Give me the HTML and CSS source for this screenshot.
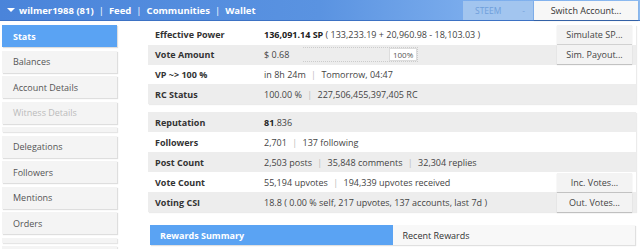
FILE: index.html
```html
<!DOCTYPE html>
<html>
<head>
<meta charset="utf-8">
<link rel="stylesheet" href="styles.css">
</head>
<body>
<header class="topbar">
  <nav class="nav">
    <span class="caret"></span>
    <a class="nav-link">wilmer1988 (81)</a><span class="sep">|</span>
    <a class="nav-link">Feed</a><span class="sep">|</span>
    <a class="nav-link">Communities</a><span class="sep">|</span>
    <a class="nav-link">Wallet</a>
  </nav>
  <div class="topright">
    <div class="select"><span>STEEM</span><span class="sel-arrow">-</span></div>
    <div class="switch">Switch Account...</div>
  </div>
</header>
<div class="layout">
  <aside class="sidebar">
    <div class="side-item active">Stats</div>
    <div class="side-item">Balances</div>
    <div class="side-item">Account Details</div>
    <div class="side-item disabled">Witness Details</div>
    <div class="side-sep"></div>
    <div class="side-item">Delegations</div>
    <div class="side-item">Followers</div>
    <div class="side-item">Mentions</div>
    <div class="side-item">Orders</div>
    <div class="side-sep"></div>
    <div class="side-item last"></div>
  </aside>
  <main class="main">
    <div class="table first">
      <div class="row">
        <div class="label">Effective Power</div>
        <div class="value"><b>136,091.14 SP</b> ( 133,233.19 + 20,960.98 - 18,103.03 )</div>
        <div class="btn">Simulate SP...</div>
      </div>
      <div class="row alt">
        <div class="label">Vote Amount</div>
        <div class="value vote">
          <span>$ 0.68</span>
          <div class="slider"><span class="slider-val">100%</span></div>
        </div>
        <div class="btn">Sim. Payout...</div>
      </div>
      <div class="row">
        <div class="label">VP ~&gt; 100 %</div>
        <div class="value">in 8h 24m <span class="pipe">|</span> Tomorrow, 04:47</div>
      </div>
      <div class="row alt">
        <div class="label">RC Status</div>
        <div class="value">100.00 % <span class="pipe">|</span> 227,506,455,397,405 RC</div>
      </div>
    </div>
    <div class="table second">
      <div class="row alt">
        <div class="label">Reputation</div>
        <div class="value"><b>81</b>.836</div>
      </div>
      <div class="row">
        <div class="label">Followers</div>
        <div class="value">2,701 <span class="pipe">|</span> 137 following</div>
      </div>
      <div class="row alt">
        <div class="label">Post Count</div>
        <div class="value">2,503 posts <span class="pipe">|</span> 35,848 comments <span class="pipe">|</span> 32,304 replies</div>
      </div>
      <div class="row">
        <div class="label">Vote Count</div>
        <div class="value">55,194 upvotes <span class="pipe">|</span> 194,339 upvotes received</div>
        <div class="btn">Inc. Votes...</div>
      </div>
      <div class="row alt">
        <div class="label">Voting CSI</div>
        <div class="value">18.8 ( 0.00 % self, 217 upvotes, 137 accounts, last 7d )</div>
        <div class="btn">Out. Votes...</div>
      </div>
    </div>
    <div class="tabs">
      <div class="tab active">Rewards Summary</div>
      <div class="tab">Recent Rewards</div>
    </div>
  </main>
</div>
</body>
</html>
```
FILE: styles.css
```css
* { box-sizing: border-box; }
html, body { margin: 0; padding: 0; }
body {
  width: 640px;
  height: 249px;
  overflow: hidden;
  background: #fff;
  font-family: "Open Sans", "DejaVu Sans", sans-serif;
  font-size: 9px;
  color: #333;
}
.topbar {
  height: 21px;
  display: flex;
  align-items: center;
  justify-content: space-between;
  background: linear-gradient(to right, #4a84da 0%, #5a93e1 50%, #79abec 72%, #8dbaf0 100%);
  border-bottom: 1px solid #3d72c4;
}
.nav {
  display: flex;
  align-items: center;
  color: #fff;
  font-weight: 700;
  font-size: 9.5px;
  padding-left: 7px;
}
.caret {
  width: 0; height: 0;
  border-left: 4px solid transparent;
  border-right: 4px solid transparent;
  border-top: 4px solid #fff;
  margin-right: 4px;
}
.nav-link { color: #fff; }
.sep { margin: 0 5px; font-weight: 400; }
.topright { display: flex; align-items: stretch; height: 19px; margin-right: 2px; }
.select {
  width: 70px;
  background: #a2c5ef;
  color: #6f9fdb;
  display: flex;
  align-items: center;
  justify-content: space-between;
  padding: 0 8px 0 12px;
  font-size: 8.5px;
}
.sel-arrow { color: #7aa6dc; }
.switch {
  width: 104px;
  margin-left: 1px;
  background: #f7f7f7;
  color: #333;
  display: flex;
  align-items: center;
  justify-content: center;
  font-size: 9px;
  box-shadow: 0 1px 1px rgba(0,0,0,.15);
}
.layout { display: flex; padding-top: 4px; height: 228px; overflow: hidden; }
.sidebar {
  width: 148px;
  padding-left: 2px;
  display: flex;
  flex-direction: column;
  gap: 3.5px;
}
.side-item {
  width: 115px;
  height: 22px;
  flex: none;
  background: #f4f4f4;
  box-shadow: 1px 1px 1px rgba(0,0,0,.13);
  display: flex;
  align-items: center;
  padding-left: 11px;
  color: #555;
  font-size: 9px;
}
.side-item.last { height: 4px; }
.side-item.active { background: #5aa3f3; color: #fff; font-weight: 700; }
.side-item.disabled { color: #bbb; }
.side-sep {
  width: 115px;
  height: 5px;
  flex: none;
  background: #f4f4f4;
  box-shadow: 1px 1px 1px rgba(0,0,0,.1);
}
.main { width: 488px; }
.table { box-shadow: 1px 1px 1px rgba(0,0,0,.08); }
.table.first .row { height: 19.75px; }
.table.second { margin-top: 8px; }
.row {
  height: 20px;
  display: flex;
  align-items: center;
  background: #fff;
}
.row.alt { background: #ededed; }
.label { width: 116px; padding-left: 7px; font-weight: 700; color: #333; }
.value { flex: 1; color: #444; white-space: nowrap; }
.value b { color: #222; }
.pipe { color: #bbb; margin: 0 3px; }
.vote { display: flex; align-items: center; }
.slider {
  margin-left: 14px;
  width: 115px;
  height: 15px;
  border: 1px dotted #ccc;
  border-left: none;
  display: flex;
  justify-content: flex-end;
  align-items: center;
}
.slider-val {
  background: #fff;
  border: 1px solid #ddd;
  padding: 1px 3px;
  font-size: 8px;
  color: #555;
  height: 13px;
  line-height: 10px;
}
.btn {
  width: 75px;
  height: 19px;
  margin-right: 4px;
  background: #f3f3f3;
  box-shadow: 0 1px 1px rgba(0,0,0,.18);
  display: flex;
  align-items: center;
  justify-content: center;
  color: #444;
}
.tabs {
  margin-top: 13px;
  margin-left: 2px;
  width: 485px;
  height: 20px;
  display: flex;
  box-shadow: 1px 1px 1px rgba(0,0,0,.12);
}
.tab {
  flex: 1;
  display: flex;
  align-items: center;
  padding-left: 10px;
  background: #f8f8f8;
  color: #333;
}
.tab.active { background: #5aa3f3; color: #fff; font-weight: 700; }
```
